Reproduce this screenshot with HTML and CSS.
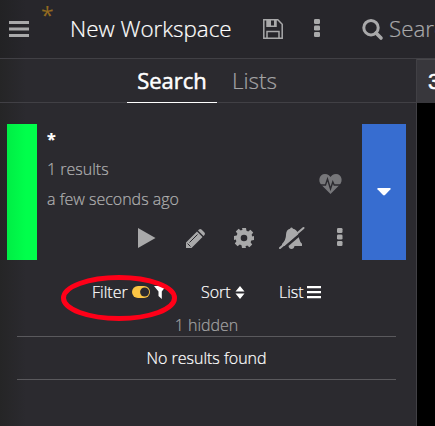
FILE: index.html
```html
<!DOCTYPE html>
<html lang="en">
<head>
<meta charset="utf-8">
<title>New Workspace</title>
<link rel="stylesheet" href="styles.css">
</head>
<body>
<div class="app">
  <header class="topbar">
    <div class="menu">
      <svg width="20" height="16" viewBox="0 0 20 16"><path d="M0 0h20v3H0zM0 6.500h20v3H0zM0 13h20v3H0z"/></svg>
      <span class="dirty">*</span>
    </div>
    <h1 class="title">New Workspace</h1>
    <svg class="save" width="20" height="20" viewBox="0 0 20 20" fill="none" stroke="currentColor" stroke-width="1.500"><path d="M.8.8h14l4.400 4.400v14H.8z"/><path d="M4 19v-6.500h12V19M4 1v6.200h9V1"/><path d="M4 1h4v6H4zM11 1h2v6h-2z" fill="currentColor" stroke="none"/></svg>
    <svg class="more" width="6" height="18" viewBox="0 0 6 18"><rect width="6" height="5" rx="1.300"/><rect y="6.500" width="6" height="5" rx="1.300"/><rect y="13" width="6" height="5" rx="1.300"/></svg>
    <svg class="find" width="21" height="21" viewBox="0 0 21 21" fill="none" stroke="currentColor"><circle cx="9" cy="8.700" r="7.200" stroke-width="3"/><path d="M14 14l5 5" stroke-width="3.600" stroke-linecap="round"/></svg>
    <span class="find-text">Search</span>
  </header>
  <div class="main">
    <aside class="panel">
      <nav class="tabs">
        <a class="tab active">Search</a>
        <a class="tab">Lists</a>
      </nav>
      <section class="card">
        <div class="status"></div>
        <div class="body">
          <div class="name">*</div>
          <div class="info">1 results</div>
          <div class="info">a few seconds ago</div>
          <svg class="heart" width="23" height="20" viewBox="0 0 23 20"><path d="M11.500 20L2 10.500C-1 7 0 0 6 0c3 0 4.500 1.500 5.500 3C12.500 1.500 14 0 17 0c6 0 7 7 4 10.500z"/><path d="M0 11h6.500l2-6 3 10 2.300-7 1.400 3H23" fill="none" stroke="#2b2a2f" stroke-width="1.400"/></svg>
          <div class="actions">
            <svg width="18" height="20" viewBox="0 0 18 20"><path d="M0 0l17.500 10L0 20z"/></svg>
            <svg class="pencil" width="19" height="19" viewBox="0 0 19 19"><path d="M0 19v-5.500L11 2.500 16.500 8 5.500 19zM12 1.500l1-1q1.200-1 2.500 0l3 3q1 1.200 0 2.500l-1 1z"/><path d="M3.500 13.500l8-8M1.500 14.500l3 3" fill="none" stroke="#2b2a2f"/></svg>
            <svg class="gear" width="20" height="20" viewBox="0 0 20 20"><path fill-rule="evenodd" d="M8 0h4l.5 2.700 1.700.7 2.200-1.600 2.800 2.800-1.600 2.200.7 1.700L20 8v4l-2.700.5-.7 1.700 1.600 2.200-2.800 2.800-2.200-1.600-1.700.7L12 20H8l-.5-2.700-1.700-.7-2.200 1.600-2.800-2.800 1.600-2.200-.7-1.700L0 12V8l2.700-.5.7-1.700-1.600-2.200L4.600.8l2.200 1.600 1.700-.7zM10 6.700a3.300 3.300 0 100 6.600 3.300 3.300 0 000-6.600z"/></svg>
            <svg class="bell" width="26" height="22" viewBox="0 0 26 22"><path d="M3 17q4-4 4-9 0-5.200 4-6.300Q12.500-.5 14 1.700q3.600.8 4.800 4.500l1.200 5q1 4 3 5.500v2.300H15.500q-.5 3-3 3t-3-3H3z"/><path d="M2.200 23.500L26.500 2.700" stroke="#2b2a2f" stroke-width="2.500"/><path d="M1 21L24.500 1" stroke="currentColor" stroke-width="2.100" stroke-linecap="round"/></svg>
            <svg class="dots" width="6" height="18" viewBox="0 0 6 18"><rect width="5.500" height="5" rx="1.300"/><rect y="6.500" width="5.500" height="5" rx="1.300"/><rect y="13" width="5.500" height="5" rx="1.300"/></svg>
          </div>
        </div>
        <div class="expand"><svg width="14" height="8" viewBox="0 0 14 8"><path d="M1 0h12q1.300.3.500 1.300L8 7q-1 .8-2 0L.5 1.300Q-.3.300 1 0z"/></svg></div>
      </section>
      <div class="tools">
        <div class="tool filter">Filter
          <svg class="toggle" width="18" height="12" viewBox="0 0 18 12"><rect width="18" height="12" rx="6"/><circle cx="12.600" cy="6" r="4.500" fill="#2b2a2f"/></svg>
          <svg class="funnel" width="12" height="13" viewBox="0 0 12 13"><path d="M0 0h12L7.800 5.500V13L4.500 10V5.500z"/></svg>
          <svg class="ring" width="118" height="48" viewBox="0 0 118 48"><ellipse cx="59" cy="24" rx="55.500" ry="20.500" fill="none" stroke="#ff0018" stroke-width="5"/></svg>
        </div>
        <div class="tool sort">Sort
          <svg class="updown" width="10" height="13" viewBox="0 0 10 13"><path d="M.5 5.500L5 0l4.500 5.500zM.5 7.500h9L5 13z"/></svg>
        </div>
        <div class="tool list">List
          <svg class="lines" width="14" height="12" viewBox="0 0 14 12"><path d="M0 0h14v2.200H0zM0 5h14v2.200H0zM0 10h14v2.200H0z"/></svg>
        </div>
      </div>
      <div class="hidden-count">1 hidden</div>
      <div class="empty">No results found</div>
    </aside>
    <section class="view">
      <div class="view-tab">3</div>
    </section>
  </div>
</div>
</body>
</html>
```
FILE: styles.css
```css
* { box-sizing: border-box; }
body {
  margin: 0;
  overflow: hidden;
  background: #2b2a2f;
  color: #fff;
  font-family: "Open Sans", sans-serif;
  font-weight: 300;
  -webkit-text-stroke: 0.2px currentColor;
}
svg { display: block; flex: none; fill: currentColor; overflow: visible; }
svg[fill="none"] { fill: none; }
.app { width: 435px; height: 426px; overflow: hidden; display: flex; flex-direction: column; }
.topbar {
  height: 59px;
  flex: none;
  display: flex;
  align-items: center;
  padding-left: 9px;
  border-bottom: 1px solid #414045;
  background: linear-gradient(90deg, #222224, #27262b 26px);
  color: #a9a9aa;
  white-space: nowrap;
}
.topbar > * { flex: none; }
.menu { position: relative; width: 61px; }
.dirty { position: absolute; left: 32px; top: -22px; font-size: 23px; line-height: 32px; font-weight: 400; color: #926a20; -webkit-text-stroke: 0; }
.title { margin: 0; width: 193px; font-size: 22.4px; line-height: 30px; font-weight: 300; color: #fff; }
.more { margin: -2px 0 0 31px; }
.find { margin-left: 42px; }
.find-text { margin-left: 6px; font-size: 22.4px; line-height: 30px; }
.main { flex: 1; display: flex; min-height: 0; }
.panel { width: 417px; flex: none; border-right: 1px solid #414045; background: linear-gradient(90deg, #252526, #2b2a2f 26px); }
.tabs { height: 44px; display: flex; padding-left: 127px; border-bottom: 1px solid #414045; }
.tab { height: 44px; padding-left: 15px; font-size: 22.4px; line-height: 43px; color: #a3a3a4; }
.tab.active { width: 90px; padding: 0; text-align: center; border-bottom: 1px solid #fff; font-size: 22px; font-weight: 400; color: #fff; -webkit-text-stroke: 0.5px #fff; }
.card { display: flex; height: 136px; margin: 21px 10px 0 7px; }
.status { width: 30px; background: linear-gradient(90deg, #00ee45, #00ff4b 19px); }
.body { position: relative; flex: 1; padding-left: 10px; color: #b0b0b1; font-size: 16px; line-height: 30px; }
.name { font-weight: 700; color: #fff; }
.heart { position: absolute; right: 20px; top: 50px; color: #77777a; }
.actions { display: flex; align-items: center; height: 20px; margin: 14px 0 0 91px; color: #a9a9aa; }
.pencil { margin-left: 30px; }
.gear { margin-left: 29px; }
.bell { margin-left: 25px; }
.dots { margin: -2px 0 0 32px; }
.expand { width: 44px; display: flex; align-items: center; justify-content: center; background: #376dd0; }
.tools { display: flex; height: 32px; margin-top: 16px; font-size: 16px; line-height: 32px; }
.tool { position: relative; display: flex; align-items: center; }
.filter { width: 109px; margin-left: 92px; }
.sort { width: 78px; }
.toggle { margin-left: 4px; color: #fcc544; }
.funnel { margin: 1px 0 0 4px; }
.updown { margin-left: 4px; }
.lines { margin-left: 3px; }
.ring { position: absolute; left: -32px; top: -2px; }
.hidden-count { height: 29px; margin: 0 20px 0 17px; padding-top: 6px; border-bottom: 1px solid #5a595d; font-size: 16px; line-height: 22px; text-align: center; color: #a3a3a4; }
.empty { height: 43px; margin: 0 20px 0 17px; border-bottom: 1px solid #5a595d; font-size: 16px; line-height: 42px; text-align: center; }
.view { flex: 1; overflow: hidden; background: #000; }
.view-tab { height: 44px; padding-left: 11px; background: #38373c; border-top: 1px solid #48474b; font-family: "Liberation Sans", sans-serif; font-size: 22px; line-height: 43px; font-weight: 400; -webkit-text-stroke: 0.5px #fff; }
```
